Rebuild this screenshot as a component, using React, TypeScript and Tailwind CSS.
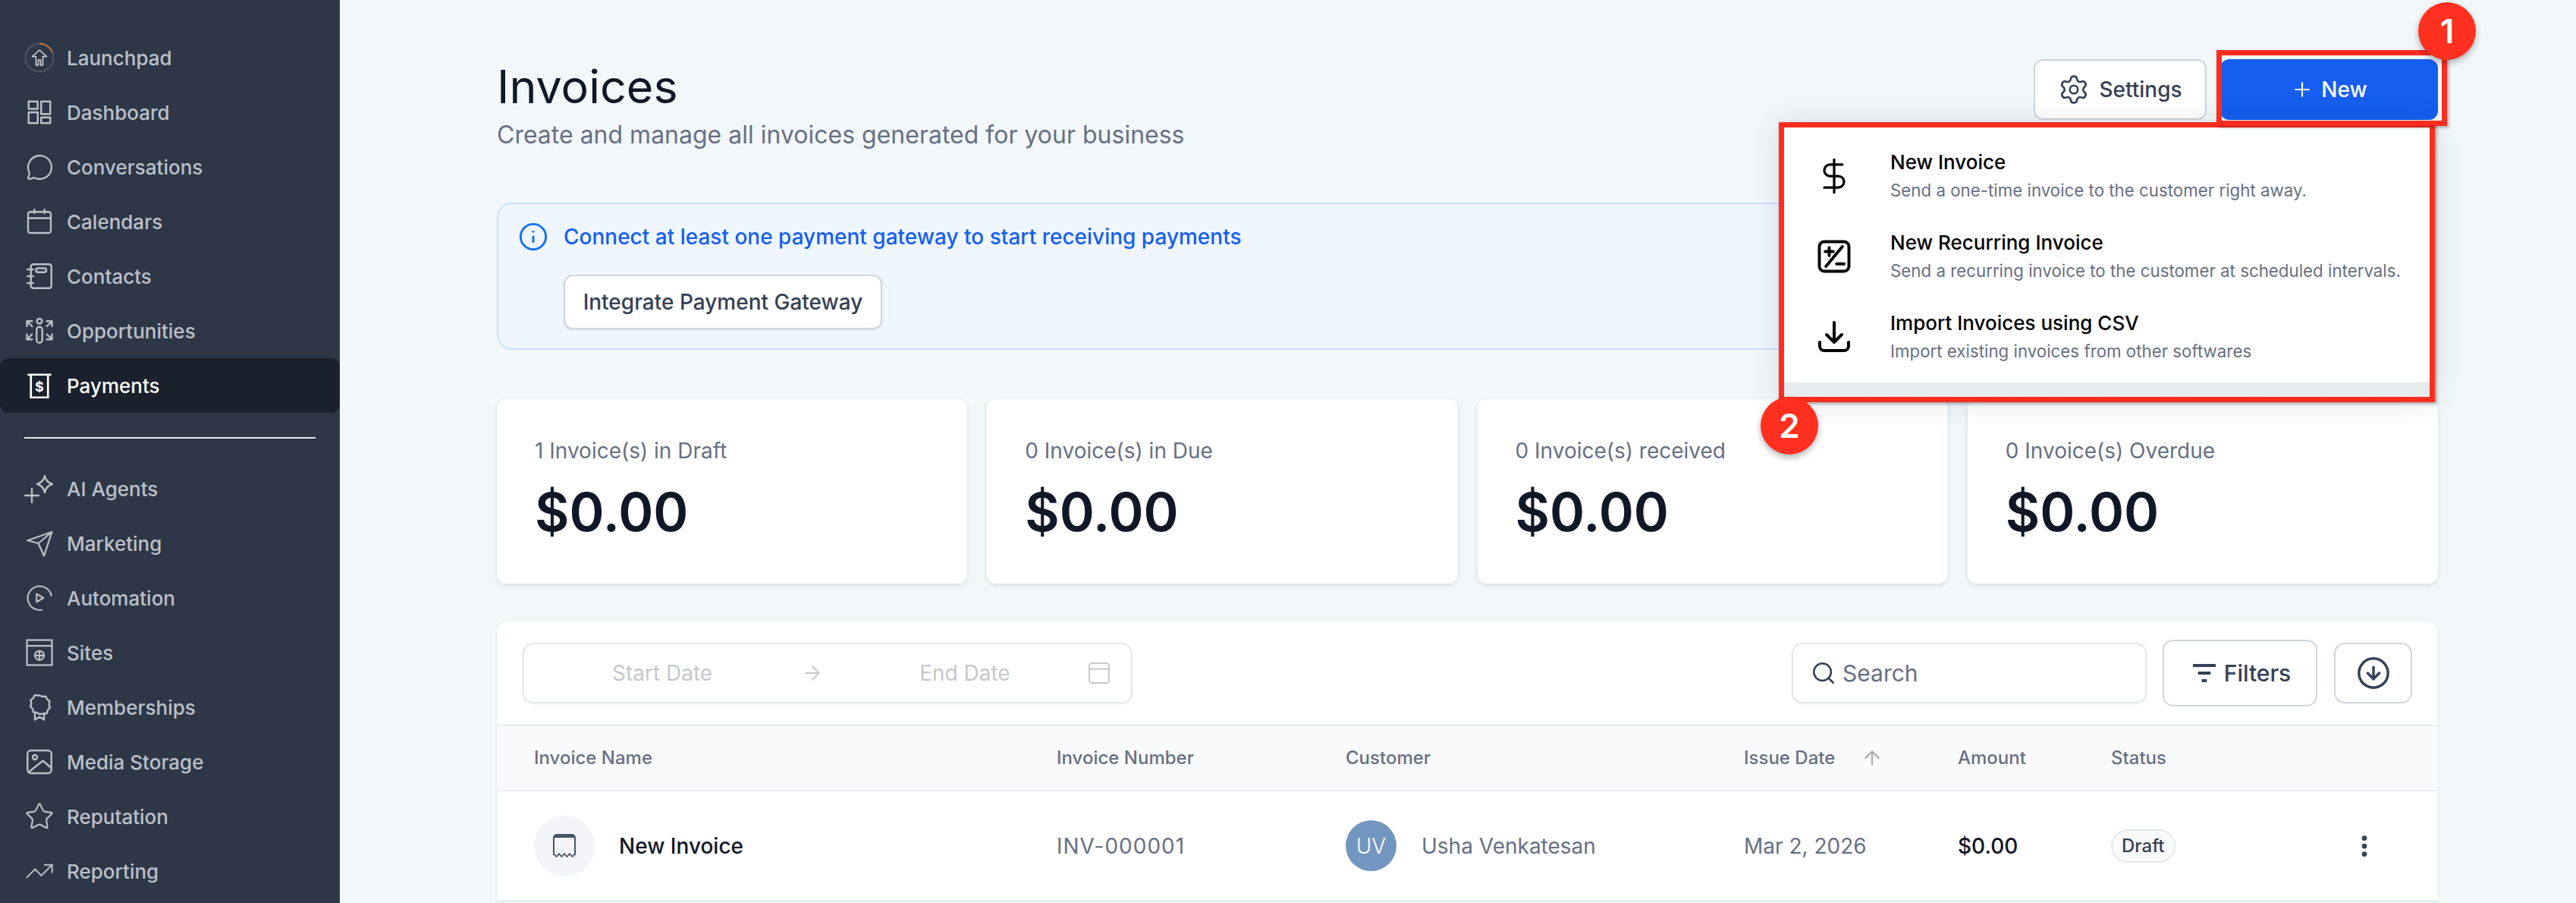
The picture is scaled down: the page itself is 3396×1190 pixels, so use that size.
import { Settings, Plus, Info, ArrowRight, ArrowUp, Search, EllipsisVertical, DollarSign, Star, TrendingUp, MessageCircle, ArrowDownCircle } from 'lucide-react';
import type { ReactNode } from 'react';

const font = "font-['Inter',sans-serif]";

function Svg({ children, className = 'size-[36px]', sw = 1.5 }: { children: ReactNode; className?: string; sw?: number }) {
  return (
    <svg viewBox="0 0 24 24" fill="none" stroke="currentColor" strokeWidth={sw} strokeLinecap="round" strokeLinejoin="round" className={className}>
      {children}
    </svg>
  );
}

const navTop: { label: string; icon: ReactNode; active?: boolean }[] = [
  {
    label: 'Launchpad',
    icon: (
      <svg viewBox="0 0 40 40" fill="none" className="size-[40px]">
        <circle cx="20" cy="20" r="18.500" stroke="#4b5563" strokeWidth="2" />
        <path d="M20 1.500a18.500 18.500 0 0 1 17 11" stroke="#c2703a" strokeWidth="2" />
        <path d="M20 10l-9.500 8.500h5V30h3v-7h3v7h3V18.500h5z" stroke="#d0d5dd" strokeWidth="1.600" strokeLinejoin="round" />
      </svg>
    ),
  },
  {
    label: 'Dashboard',
    icon: (
      <Svg sw={1.6}>
        <rect x="2.500" y="2.500" width="8" height="6.500" />
        <rect x="13.500" y="2.500" width="8" height="11" />
        <rect x="2.500" y="12" width="8" height="9.500" />
        <rect x="13.500" y="16.500" width="8" height="5" />
      </Svg>
    ),
  },
  { label: 'Conversations', icon: <MessageCircle className="size-[37px]" strokeWidth={1.5} /> },
  {
    label: 'Calendars',
    icon: (
      <Svg sw={1.6}>
        <rect x="2" y="3.500" width="20" height="18.500" rx="2" />
        <path d="M2 9h20M7.500 1.500v3M16.500 1.500v3" />
      </Svg>
    ),
  },
  {
    label: 'Contacts',
    icon: (
      <Svg sw={1.6}>
        <rect x="4.500" y="1.500" width="18" height="21" rx="2" />
        <rect x="9" y="5" width="9" height="3.500" rx="1.700" />
        <path d="M1.500 6h5M1.500 12h5M1.500 18h5" />
      </Svg>
    ),
  },
  {
    label: 'Opportunities',
    icon: (
      <Svg sw={1.6}>
        <circle cx="12" cy="3.500" r="2.200" />
        <path d="M9.500 11a2.500 2.500 0 0 1 5 0v9a2.500 2.500 0 0 1-5 0zM1 8V3.500h4.500M23 8V3.500h-4.500M1 3.500l4.500 4.500M23 3.500L18.500 8M1 15v4.500h4.500M23 15v4.500h-4.500M1 19.500L5.500 15M23 19.500L18.500 15" />
      </Svg>
    ),
  },
  {
    label: 'Payments',
    active: true,
    icon: (
      <svg viewBox="0 0 24 24" fill="none" stroke="currentColor" strokeWidth="1.800" className="size-[36px]">
        <path d="M1.500 2.500h21M4.500 2.500v20h15v-20" />
        <text x="12" y="17" textAnchor="middle" fontSize="12" fontWeight="700" fill="currentColor" stroke="none">$</text>
      </svg>
    ),
  },
];

const navBottom: { label: string; icon: ReactNode }[] = [
  {
    label: 'AI Agents',
    icon: (
      <svg viewBox="0 0 40 40" fill="none" stroke="currentColor" strokeWidth="2.400" strokeLinecap="round" strokeLinejoin="round" className="size-[40px]">
        <path d="M27 3c1 6 4 9 10 11-6 2-9 5-10 11-1-6-4-9-10-11 6-2 9-5 10-11z" />
        <path d="M10 20v18M1 29h18" />
      </svg>
    ),
  },
  {
    label: 'Marketing',
    icon: (
      <Svg>
        <path d="M1.500 9.500L23 2l-7 21-5-11zM11 12L23 2" />
      </Svg>
    ),
  },
  {
    label: 'Automation',
    icon: (
      <Svg sw={1.400}>
        <path d="M22.500 10A10.500 10.500 0 1 0 14 22.500" />
        <path d="M9.500 8.500l6 3.500-6 3.500z" />
      </Svg>
    ),
  },
  {
    label: 'Sites',
    icon: (
      <Svg sw={1.500}>
        <rect x="1" y="1" width="22" height="22" strokeLinejoin="miter" />
        <path d="M1 6h22" />
        <circle cx="12" cy="14.500" r="4" />
        <path d="M8 14.500h8M12 10.500v8" />
      </Svg>
    ),
  },
  {
    label: 'Memberships',
    icon: (
      <Svg sw={1.600}>
        <path d="M12 1.500l2.600 1.200 2.900-.300 1.200 2.600 2.300 1.800-.600 2.800.800 2.800-2 2.100-.600 2.800-2.900.400L12 18.100l-2.400-1.400-2.900-.400-.600-2.800-2-2.100.800-2.800-.600-2.800 2.300-1.800 1.200-2.600 2.900.300z" />
        <path d="M8 17.500v5.500l4-2.500 4 2.500v-5.500" />
      </Svg>
    ),
  },
  {
    label: 'Media Storage',
    icon: (
      <Svg sw={1.600}>
        <rect x="1.500" y="2" width="21" height="20" rx="3" />
        <circle cx="8" cy="8" r="2" />
        <path d="M2.500 21L15 11l7 6" />
      </Svg>
    ),
  },
  { label: 'Reputation', icon: <Star className="size-[42px]" strokeWidth={1.300} /> },
  { label: 'Reporting', icon: <TrendingUp className="size-[44px]" strokeWidth={1.200} /> },
];

function NavRow({ label, icon, active }: { label: string; icon: ReactNode; active?: boolean }) {
  return (
    <div className={`flex h-[72px] items-center rounded-[12px] pl-[32px] text-[26px] font-medium ${active ? 'bg-[#1a202c] text-white' : 'text-[#bcc0c8]'}`}>
      <span className="flex w-[40px] shrink-0 justify-center">{icon}</span>
      <span className="ml-[16px]">{label}</span>
    </div>
  );
}

function StatCard({ label }: { label: string }) {
  return (
    <div className="rounded-[12px] bg-white pl-[50px] pt-[48px] shadow-[0_2px_6px_rgba(16,24,40,0.12)]">
      <p className="text-[28px] leading-[40px] text-[#667085]">{label}</p>
      <p className="mt-[16px] text-[70px] font-semibold leading-[90px] text-[#101828]">$0.00</p>
    </div>
  );
}

function MenuRow({ icon, title, sub }: { icon: ReactNode; title: string; sub: string }) {
  return (
    <div className="flex h-[106px] items-center">
      <span className="flex w-[132px] shrink-0 justify-center text-black">{icon}</span>
      <div className="ml-[8px]">
        <p className="text-[26px] font-medium leading-[36px] text-black">{title}</p>
        <p className="mt-[2px] text-[22.300px] leading-[34px] text-[#667085]">{sub}</p>
      </div>
    </div>
  );
}

function Badge({ n, className }: { n: number; className: string }) {
  return (
    <div className={`absolute flex size-[76px] items-center justify-center rounded-full bg-[#ff3020] text-[44px] font-semibold text-white shadow-[0_4px_8px_rgba(0,0,0,0.3)] ${className}`}>
      {n}
    </div>
  );
}

const cols = 'grid-cols-[689px_381px_525px_282px_202px_1fr]';

export default function App() {
  return (
    <div className={`${font} relative flex h-[1190px] w-[3396px] overflow-hidden bg-[#f2f7fa]`}>
      <aside className="flex h-full w-[448px] shrink-0 flex-col bg-[#2d3748] pt-[40px]">
        <div className="flex flex-col">
          {navTop.map((n) => <NavRow key={n.label} {...n} />)}
        </div>
        <div className="mx-[32px] mb-[30px] mt-[32px] h-[2px] bg-[#e5e7eb]" />
        <div className="flex flex-col">
          {navBottom.map((n) => <NavRow key={n.label} {...n} />)}
        </div>
      </aside>

      <main className="min-w-0 flex-1 pl-[207px] pr-[182px] pt-[78px]">
        <header className="flex items-start justify-between">
          <div>
            <h1 className="text-[61px] font-normal leading-[72px] text-[#101828]">Invoices</h1>
            <p className="mt-[6px] text-[32px] leading-[44px] text-[#667085]">Create and manage all invoices generated for your business</p>
          </div>
          <div className="flex gap-[18px]">
            <button className="flex h-[80px] w-[228px] items-center justify-center gap-[12px] rounded-[12px] border-2 border-[#d0d5dd] bg-white text-[28px] font-medium text-[#344054]">
              <Settings className="size-[42px]" strokeWidth={1.500} />
              Settings
            </button>
            <button className="flex h-[80px] w-[287px] items-center justify-center gap-[10px] rounded-[12px] bg-[#155eef] text-[28px] font-medium text-white">
              <Plus className="size-[30px]" strokeWidth={1.75} />
              New
            </button>
          </div>
        </header>

        <section className="mr-[20px] mt-[67px] h-[194px] rounded-[20px] border-2 border-[#c9e0fd] bg-[#eff6ff] pl-[26px] pt-[22px]">
          <div className="flex items-center gap-[20px] text-[28px] font-medium text-[#155eef]">
            <Info className="size-[40px] text-[#1570ef]" strokeWidth={1.75} />
            Connect at least one payment gateway to start receiving payments
          </div>
          <button className="ml-[60px] mt-[29px] flex h-[72px] w-[420px] items-center justify-center rounded-[12px] border-2 border-[#d0d5dd] bg-white text-[28px] font-medium text-[#344054] shadow-[0_1px_2px_rgba(16,24,40,0.1)]">
            Integrate Payment Gateway
          </button>
        </section>

        <section className="mt-[65px] grid h-[243px] grid-cols-4 gap-[26px]">
          <StatCard label="1 Invoice(s) in Draft" />
          <StatCard label="0 Invoice(s) in Due" />
          <StatCard label="0 Invoice(s) received" />
          <StatCard label="0 Invoice(s) Overdue" />
        </section>

        <section className="mt-[50px] rounded-t-[16px] bg-white shadow-[0_1px_4px_rgba(16,24,40,0.08)]">
          <div className="flex h-[136px] items-center px-[34px]">
            <div className="flex h-[80px] w-[804px] items-center rounded-[14px] border-2 border-[#e4e7ec] pl-[116px] pr-[28px] text-[28px] text-[#c4c7cc] shadow-[0_1px_2px_rgba(16,24,40,0.08)]">
              <span>Start Date</span>
              <ArrowRight className="ml-[117px] size-[30px]" strokeWidth={1.5} />
              <span className="ml-[126px]">End Date</span>
              <svg viewBox="0 0 26 26" fill="none" stroke="currentColor" strokeWidth="1.800" className="ml-auto size-[28px]">
                <rect x="1" y="1" width="24" height="24" rx="3" />
                <path d="M1 8h24" />
              </svg>
            </div>
            <div className="ml-auto flex h-[80px] w-[468px] items-center gap-[8px] rounded-[14px] border-2 border-[#e4e7ec] pl-[23px] text-[30px] text-[#667085] shadow-[0_1px_2px_rgba(16,24,40,0.08)]">
              <Search className="size-[34px] text-[#344054]" strokeWidth={1.800} />
              Search
            </div>
            <button className="ml-[21px] flex h-[88px] w-[204px] items-center justify-center gap-[6px] rounded-[14px] border-2 border-[#d0d5dd] text-[30px] font-medium text-[#344054]">
              <svg viewBox="0 0 24 24" fill="none" stroke="currentColor" strokeWidth="2.400" className="size-[40px]"><path d="M3 6h18M7 12h10M10 18h4" /></svg>
              Filters
            </button>
            <button className="ml-[22px] flex h-[80px] w-[103px] items-center justify-center rounded-[14px] border-2 border-[#d0d5dd] text-[#344054]">
              <ArrowDownCircle className="size-[46px]" strokeWidth={1.800} />
            </button>
          </div>

          <div className={`grid h-[88px] ${cols} items-center border-y-2 border-[#eaecf0] bg-[#f9fafb] pl-[49px] text-[24px] font-medium text-[#667085]`}>
            <span>Invoice Name</span>
            <span>Invoice Number</span>
            <span>Customer</span>
            <span className="flex items-center gap-[34px]">Issue Date <ArrowUp className="size-[30px] text-[#a0a3a8]" strokeWidth={1.5} /></span>
            <span>Amount</span>
            <span>Status</span>
          </div>

          <div className={`grid h-[145px] ${cols} items-center border-b-2 border-[#eaecf0] pl-[49px] text-[28px]`}>
            <div className="flex items-center gap-[32px]">
              <span className="flex size-[80px] items-center justify-center rounded-full bg-[#f2f4f7] text-[#475467]">
                <svg viewBox="0 0 32 32" fill="none" stroke="currentColor" strokeWidth="2" strokeLinejoin="round" className="size-[32px]">
                  <path d="M2 28V5a4 4 0 0 1 4-4h20a4 4 0 0 1 4 4v23" />
                  <path d="M2 3.500h28" strokeWidth="3" />
                  <path d="M2 26l3.500 4 3.500-4 3.500 4 3.500-4 3.500 4 3.500-4 3.500 4 3.500-4" strokeWidth="1.800" />
                </svg>
              </span>
              <span className="font-medium text-[#101828]">New Invoice</span>
            </div>
            <span className="tracking-[1px] text-[#667085]">INV-000001</span>
            <div className="flex items-center gap-[33px] text-[#667085]">
              <span className="flex size-[67px] items-center justify-center rounded-full bg-[#7396c0] text-[28px] font-light text-white">UV</span>
              Usha Venkatesan
            </div>
            <span className="text-[#667085]">Mar 2, 2026</span>
            <span className="font-medium text-[#101828]">$0.00</span>
            <div className="flex items-center justify-between pr-[79px]">
              <span className="flex h-[44px] items-center rounded-full border-2 border-[#e4e7ec] bg-[#f9fafb] px-[12px] text-[24px] font-medium text-[#344054]">Draft</span>
              <EllipsisVertical className="size-[36px] text-[#344054]" strokeWidth={2.5} />
            </div>
          </div>
        </section>
      </main>

      {/* dropdown, boxed by the red annotation */}
      <div className="absolute left-[2345px] top-[161px] h-[369px] w-[865px] border-[7px] border-[#ff2d1f] bg-gradient-to-b from-[#c4c9ce] to-[#e8ecef] shadow-[2px_2px_4px_rgba(0,0,0,0.35),0_0_36px_rgba(16,24,40,0.12)]">
        <div className="h-[336px] bg-white pt-[11px]">
          <MenuRow icon={<DollarSign className="size-[52px]" strokeWidth={1.500} />} title="New Invoice" sub="Send a one-time invoice to the customer right away." />
          <MenuRow
            icon={
              <Svg className="size-[52px]" sw={1.800}>
                <rect x="3" y="3" width="18" height="18" rx="3" />
                <path d="M6.500 9h5M9 6.500v5M7 18L17 6M13.500 16.500h4.500" />
              </Svg>
            }
            title="New Recurring Invoice"
            sub="Send a recurring invoice to the customer at scheduled intervals."
          />
          <MenuRow
            icon={
              <Svg className="size-[48px]" sw={2}>
                <path d="M2.500 15.500v2.500a3 3 0 0 0 3 3h13a3 3 0 0 0 3-3v-2.500" />
                <path d="M12 2.500v13M7 10.500l5 5 5-5" />
              </Svg>
            }
            title="Import Invoices using CSV"
            sub="Import existing invoices from other softwares"
          />
        </div>
      </div>
      <div className="absolute left-[2922px] top-[66px] h-[100px] w-[304px] border-[7px] border-[#ff2d1f] shadow-[2px_2px_4px_rgba(0,0,0,0.3)]" />
      <Badge n={1} className="left-[3188px] top-[3px]" />
      <Badge n={2} className="left-[2321px] top-[523px]" />
    </div>
  );
}
